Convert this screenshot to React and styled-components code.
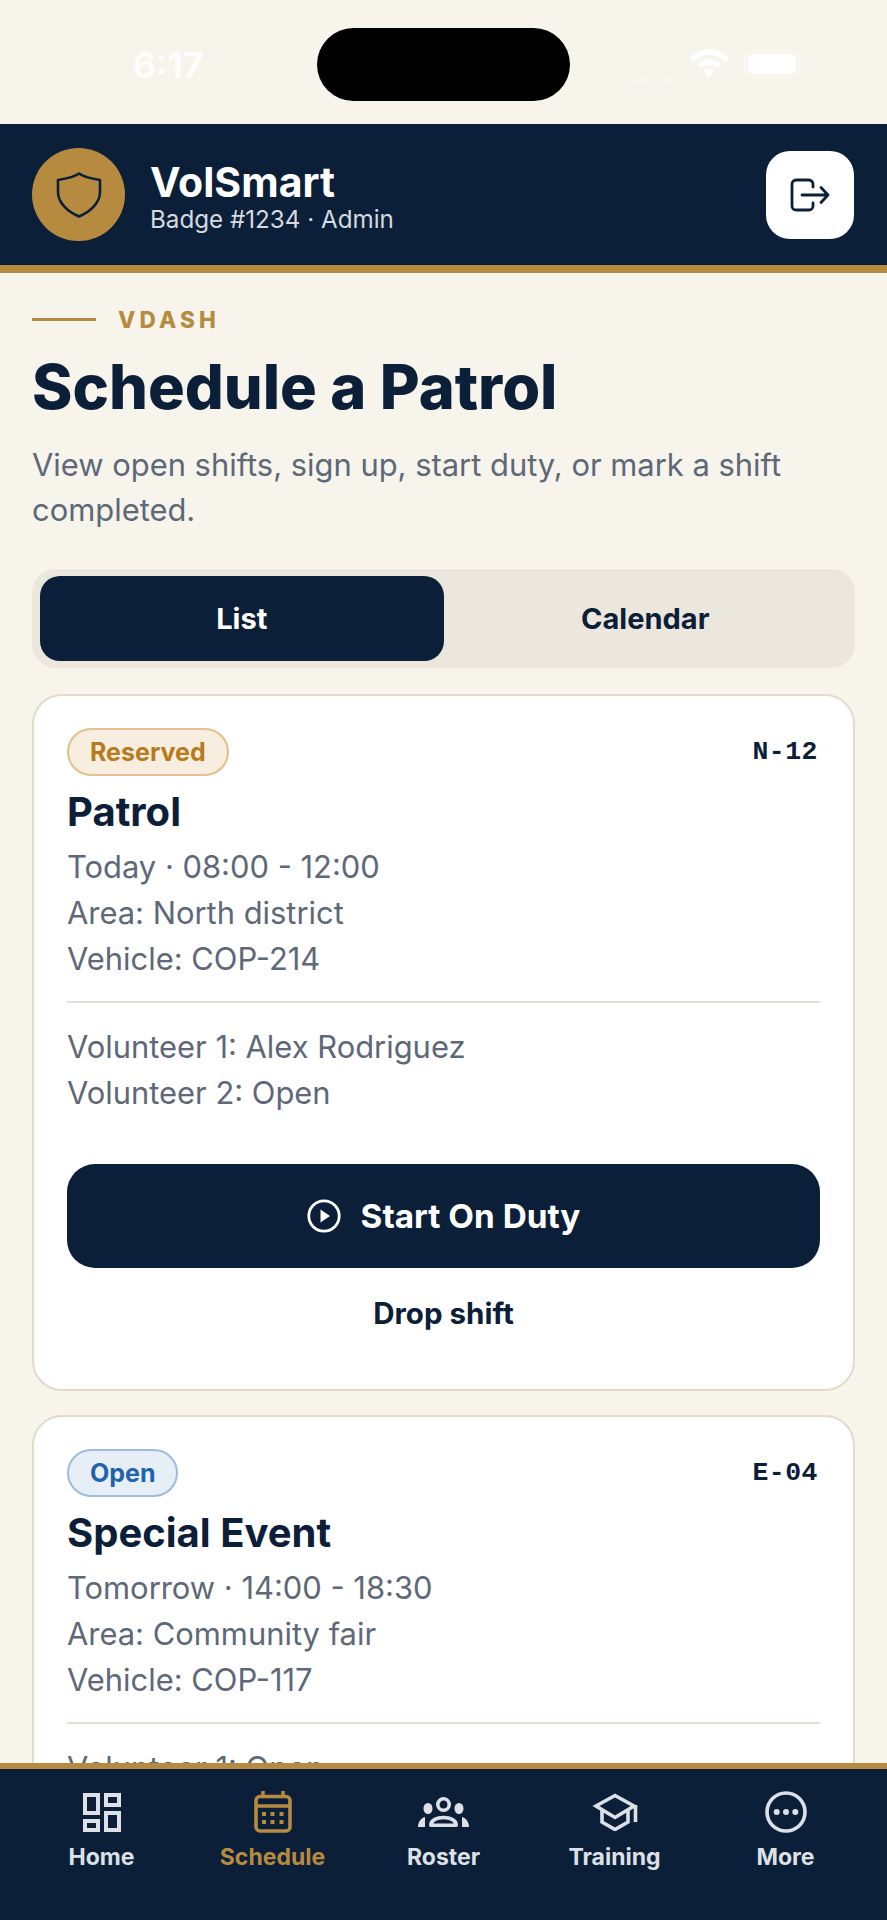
import React from "react";
import styled, { createGlobalStyle } from "styled-components";

const navy = "#0B2038";
const gold = "#B68B40";

const GlobalStyle = createGlobalStyle`
  * { box-sizing: border-box; }
  html, body { margin: 0; padding: 0; background: #F7F4EC; }
  body { font-family: Inter, "Liberation Sans", sans-serif; }
`;

const Screen = styled.div`
  width: 887px;
  height: 1920px;
  display: flex;
  flex-direction: column;
  overflow: hidden;
  background: #F7F4EC;
`;

const StatusBar = styled.div`
  height: 124px;
  flex: none;
  display: grid;
  grid-template-columns: 317px 253px 1fr;
  padding-top: 28px;
`;
const Clock = styled.div`
  color: #fff;
  font-size: 36px;
  font-weight: 600;
  padding: 15px 0 0 133px;
`;
const Island = styled.div`
  height: 73px;
  background: #000;
  border-radius: 37px;
`;
const StatusIcons = styled.div`
  display: flex;
  align-items: flex-start;
  padding: 22px 0 0 60px;
`;
const StatusGlyph = styled.svg`
  margin: ${(p) => p.$top || 0}px 0 0 ${(p) => p.$left || 0}px;
  opacity: ${(p) => (p.$faint ? 0.4 : 1)};
`;

const Header = styled.header`
  height: 149px;
  flex: none;
  background: ${navy};
  border-bottom: 8px solid ${gold};
  display: flex;
  align-items: center;
  padding: 0 33px 0 32px;
`;
const Avatar = styled.div`
  width: 93px;
  height: 93px;
  border-radius: 50%;
  background: ${gold};
  display: flex;
  align-items: center;
  justify-content: center;
`;
const Brand = styled.div`
  flex: 1;
  margin-left: 25px;
  padding-top: 5px;
`;
const BrandName = styled.div`
  color: #fff;
  font-size: 41px;
  font-weight: 700;
  line-height: 46px;
`;
const BrandSub = styled.div`
  color: #D5D9E0;
  font-size: 24.2px;
  line-height: 30px;
`;
const LogoutButton = styled.button`
  width: 88px;
  height: 88px;
  border: 0;
  border-radius: 24px;
  background: #fff;
  display: flex;
  align-items: center;
  justify-content: center;
  padding: 0;
`;

const Main = styled.main`
  flex: 1;
  min-height: 0;
  overflow: hidden;
  padding: 34px 32px 0 32px;
`;
const Eyebrow = styled.div`
  display: flex;
  align-items: center;
  gap: 22px;
  height: 24px;
  color: ${gold};
  font-size: 22.5px;
  font-weight: 800;
  letter-spacing: 4.2px;
  &::before {
    content: "";
    width: 64px;
    height: 3px;
    background: ${gold};
  }
`;
const Title = styled.h1`
  margin: 19px 0 0;
  color: ${navy};
  font-size: 61.3px;
  font-weight: 800;
  line-height: 74px;
`;
const Lead = styled.p`
  margin: 18px 0 0;
  color: #5E6878;
  font-size: 30.9px;
  line-height: 45px;
`;

const Tabs = styled.div`
  margin-top: 37px;
  height: 99px;
  border-radius: 24px;
  background: #ECE7DC;
  padding: 7px 8px;
  display: grid;
  grid-template-columns: 1fr 1fr;
`;
const Tab = styled.div`
  border-radius: 20px;
  display: flex;
  align-items: center;
  justify-content: center;
  font-size: 29px;
  font-weight: 700;
  color: ${(p) => (p.$active ? "#fff" : navy)};
  background: ${(p) => (p.$active ? navy : "transparent")};
`;

const Card = styled.section`
  margin-top: ${(p) => p.$gap}px;
  border: 2px solid #E2DBCC;
  border-radius: 30px;
  background: #fff;
  padding: 32px 33px 0;
  height: ${(p) => p.$height};
`;
const CardTop = styled.div`
  display: flex;
  justify-content: space-between;
  align-items: flex-start;
`;
const Badge = styled.span`
  height: 48px;
  padding: 0 21px;
  border-radius: 24px;
  border: 2px solid ${(p) => p.$border};
  background: ${(p) => p.$bg};
  color: ${(p) => p.$color};
  font-size: 25px;
  font-weight: 700;
  display: flex;
  align-items: center;
`;
const Code = styled.span`
  color: ${navy};
  font-family: "Liberation Mono", monospace;
  font-size: 26.5px;
  font-weight: 700;
  letter-spacing: 0.5px;
  margin: 10px 2px 0 0;
  line-height: 28px;
`;
const CardTitle = styled.h2`
  margin: 11px 0 0;
  color: ${navy};
  font-size: 40px;
  font-weight: 700;
  line-height: 50px;
`;
const Info = styled.div`
  margin-top: ${(p) => p.$top || 0}px;
  color: #5E6878;
  font-size: 30.9px;
  line-height: 46px;
`;
const Divider = styled.hr`
  margin: 19px 0 21px;
  border: 0;
  border-top: 2px solid #E6DFD1;
`;
const PrimaryButton = styled.button`
  width: 100%;
  height: 104px;
  margin-top: 48px;
  border: 0;
  border-radius: 28px;
  background: ${navy};
  color: #fff;
  font-family: inherit;
  font-size: 33.3px;
  font-weight: 700;
  display: flex;
  align-items: center;
  justify-content: center;
  gap: 20px;
`;
const TextButton = styled.div`
  margin-top: 27px;
  text-align: center;
  color: ${navy};
  font-size: 29.5px;
  font-weight: 700;
  line-height: 36px;
`;

const Nav = styled.nav`
  height: 157px;
  flex: none;
  background: ${navy};
  border-top: 6px solid ${gold};
  padding: 0 16px;
  display: grid;
  grid-template-columns: repeat(5, 1fr);
`;
const NavItem = styled.div`
  display: flex;
  flex-direction: column;
  align-items: center;
  color: ${(p) => (p.$active ? gold : "#DDE0E6")};
  font-size: 23px;
  font-weight: 700;
`;
const NavIcon = styled.div`
  height: 44px;
  margin-top: 21px;
  display: flex;
  align-items: center;
`;
const NavLabel = styled.div`
  margin-top: 9px;
  line-height: 28px;
`;

const ShieldIcon = () => (
  <svg width="46" height="46" viewBox="0 0 46 46" fill="none" stroke={navy} strokeWidth="2.6" strokeLinejoin="round">
    <path d="M23 1.5C27 4.5 35 6.5 44 8V20C44 31 34 40 23 44.5C12 40 2 31 2 20V8C11 6.5 19 4.5 23 1.5Z" />
  </svg>
);

const LogoutIcon = () => (
  <svg width="40" height="34" viewBox="0 0 40 34" fill="none" stroke={navy} strokeWidth="2.8" strokeLinecap="round" strokeLinejoin="round">
    <path d="M23 9V6a4 4 0 0 0-4-4H6a4 4 0 0 0-4 4v22a4 4 0 0 0 4 4h13a4 4 0 0 0 4-4v-3" />
    <path d="M12 17H38M31 9.5L38 17L31 24.5" />
  </svg>
);

const PlayIcon = () => (
  <svg width="34" height="34" viewBox="0 0 34 34" fill="none">
    <circle cx="17" cy="17" r="15.2" stroke="#fff" strokeWidth="2.8" />
    <path d="M13.5 10.5L23 17L13.5 23.5Z" fill="#fff" />
  </svg>
);

const HomeIcon = () => (
  <svg width="38" height="39" viewBox="0 0 38 39" fill="none" stroke="currentColor" strokeWidth="4">
    <rect x="2" y="2" width="13" height="18" />
    <rect x="23" y="2" width="13" height="10" />
    <rect x="2" y="28" width="13" height="9" />
    <rect x="23" y="20" width="13" height="17" />
  </svg>
);

const CalendarIcon = () => (
  <svg width="38" height="42" viewBox="0 0 38 42" fill="none" stroke="currentColor" strokeWidth="3.6">
    <rect x="2" y="5.5" width="34" height="34.5" rx="4" />
    <path d="M2 15H36M9 0V7M29 0V7" />
    <g fill="currentColor" stroke="none">
      <rect x="8" y="21" width="4" height="4" />
      <rect x="16.5" y="21" width="4" height="4" />
      <rect x="25.5" y="21" width="4" height="4" />
      <rect x="8" y="29" width="4" height="4" />
      <rect x="16.5" y="29" width="4" height="4" />
      <rect x="25.5" y="29" width="4" height="4" />
    </g>
  </svg>
);

const RosterIcon = () => (
  <svg width="51" height="30" viewBox="0 0 51 30" fill="none">
    <circle cx="25.5" cy="7.5" r="5.7" stroke="currentColor" strokeWidth="3.6" />
    <ellipse cx="10" cy="11.5" rx="4.5" ry="5.5" fill="currentColor" />
    <ellipse cx="41" cy="11.5" rx="4.5" ry="5.5" fill="currentColor" />
    <path d="M12.8 28.2C13 23 19 20.5 25.5 20.5C32 20.5 38 23 38.2 28.2Z" stroke="currentColor" strokeWidth="3.6" strokeLinejoin="round" />
    <path d="M0 30C0 25 3 21 7 20V30ZM51 30C51 25 48 21 44 20V30Z" fill="currentColor" />
  </svg>
);

const TrainingIcon = () => (
  <svg width="46" height="38" viewBox="0 0 46 38" fill="none" stroke="currentColor" strokeWidth="3.6">
    <path d="M23 2.5L4 13L23 24.5L42 13Z" />
    <path d="M10 17V29L23 36.5L36 29V17" />
    <path d="M43.5 12V29" />
  </svg>
);

const MoreIcon = () => (
  <svg width="42" height="42" viewBox="0 0 42 42" fill="none">
    <circle cx="21" cy="21" r="19" stroke="currentColor" strokeWidth="3.6" />
    <circle cx="11.7" cy="21" r="3" fill="currentColor" />
    <circle cx="21" cy="21" r="3" fill="currentColor" />
    <circle cx="30.3" cy="21" r="3" fill="currentColor" />
  </svg>
);

const StatusGlyphs = () => (
  <>
    <StatusGlyph width="42" height="14" viewBox="0 0 42 14" $top={24} $faint fill="#fff">
      <circle cx="4" cy="7" r="3.5" />
      <circle cx="15" cy="7" r="3.5" />
      <circle cx="26" cy="7" r="3.5" />
      <circle cx="38" cy="7" r="3.5" />
    </StatusGlyph>
    <StatusGlyph width="40" height="30" viewBox="0 0 40 30" $left={17} $top={-1} fill="#fff">
      <path d="M20 0C27 0 34 3 40 9L36 13C31 8.5 26 6 20 6C14 6 9 8.5 4 13L0 9C6 3 13 0 20 0Z" />
      <path d="M20 10C24.5 10 28.5 12 32 15L28 19C26 17 23 16 20 16C17 16 14 17 12 19L8 15C11.5 12 15.5 10 20 10Z" />
      <path d="M20 20C22 20 23.5 20.5 25 22L20 29L15 22C16.5 20.5 18 20 20 20Z" />
    </StatusGlyph>
    <StatusGlyph width="62" height="28" viewBox="0 0 62 28" $left={15} fill="none">
      <rect x="1" y="1" width="54" height="26" rx="8" stroke="#fff" strokeWidth="2" opacity="0.4" />
      <rect x="4" y="4" width="48" height="20" rx="5.5" fill="#fff" />
      <path d="M58 10C60 11 60.5 12.5 60.5 14C60.5 15.5 60 17 58 18Z" fill="#fff" opacity="0.4" />
    </StatusGlyph>
  </>
);

const shifts = [
  {
    code: "N-12",
    status: "Reserved",
    badge: { $bg: "#F7EEDF", $border: "#E2C08C", $color: "#B87A1C" },
    title: "Patrol",
    info: ["Today · 08:00 - 12:00", "Area: North district", "Vehicle: COP-214"],
    crew: ["Volunteer 1: Alex Rodriguez", "Volunteer 2: Open"],
    action: true,
  },
  {
    code: "E-04",
    status: "Open",
    badge: { $bg: "#E6EEF6", $border: "#9DBBDD", $color: "#1F62AE" },
    title: "Special Event",
    info: ["Tomorrow · 14:00 - 18:30", "Area: Community fair", "Vehicle: COP-117"],
    crew: ["Volunteer 1: Open", "Volunteer 2: Open"],
  },
];

const tabs = [
  { label: "Home", Icon: HomeIcon },
  { label: "Schedule", Icon: CalendarIcon, active: true },
  { label: "Roster", Icon: RosterIcon },
  { label: "Training", Icon: TrainingIcon },
  { label: "More", Icon: MoreIcon },
];

export default function App() {
  return (
    <Screen>
      <GlobalStyle />
      <StatusBar>
        <Clock>6:17</Clock>
        <Island />
        <StatusIcons>
          <StatusGlyphs />
        </StatusIcons>
      </StatusBar>

      <Header>
        <Avatar>
          <ShieldIcon />
        </Avatar>
        <Brand>
          <BrandName>VolSmart</BrandName>
          <BrandSub>Badge #1234 · Admin</BrandSub>
        </Brand>
        <LogoutButton>
          <LogoutIcon />
        </LogoutButton>
      </Header>

      <Main>
        <Eyebrow>VDASH</Eyebrow>
        <Title>Schedule a Patrol</Title>
        <Lead>View open shifts, sign up, start duty, or mark a shift completed.</Lead>
        <Tabs>
          <Tab $active>List</Tab>
          <Tab>Calendar</Tab>
        </Tabs>

        {shifts.map((s, i) => (
          <Card key={s.code} $gap={i === 0 ? 26 : 24} $height={i === 0 ? "697px" : "auto"}>
            <CardTop>
              <Badge {...s.badge}>{s.status}</Badge>
              <Code>{s.code}</Code>
            </CardTop>
            <CardTitle>{s.title}</CardTitle>
            <Info $top={7}>
              {s.info.map((line) => (
                <div key={line}>{line}</div>
              ))}
            </Info>
            <Divider />
            <Info>
              {s.crew.map((line) => (
                <div key={line}>{line}</div>
              ))}
            </Info>
            {s.action && (
              <>
                <PrimaryButton>
                  <PlayIcon />
                  Start On Duty
                </PrimaryButton>
                <TextButton>Drop shift</TextButton>
              </>
            )}
          </Card>
        ))}
      </Main>

      <Nav>
        {tabs.map(({ label, Icon, active }) => (
          <NavItem key={label} $active={active}>
            <NavIcon>
              <Icon />
            </NavIcon>
            <NavLabel>{label}</NavLabel>
          </NavItem>
        ))}
      </Nav>
    </Screen>
  );
}
